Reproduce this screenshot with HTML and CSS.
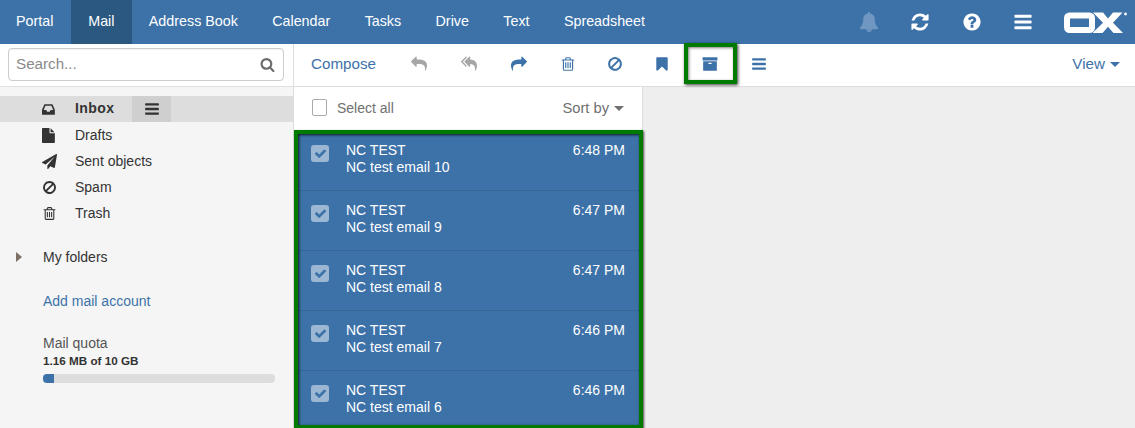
FILE: index.html
```html
<!DOCTYPE html>
<html lang="en">
<head>
<meta charset="utf-8">
<title>Mail</title>
<link rel="stylesheet" href="styles.css">
</head>
<body>
<svg class="defs" width="0" height="0" aria-hidden="true">
<symbol id="i-bell" viewBox="0 0 1792 1792"><path d="M912 1696q0-16-16-16-59 0-101.500-42.500t-42.500-101.500q0-16-16-16t-16 16q0 73 51.500 124.500t124.500 51.500q16 0 16-16zm816-288q0 52-38 90t-90 38h-448q0 106-75 181t-181 75-181-75-75-181h-448q-52 0-90-38t-38-90q50-42 91-88t85-119.500 74.500-158.500 50-206 19.500-260q0-152 117-282.500t307-158.500q-8-19-8-39 0-40 28-68t68-28 68 28 28 68q0 20-8 39 190 28 307 158.500t117 282.500q0 139 19.500 260t50 206 74.500 158.500 85 119.500 91 88z"/></symbol>
<symbol id="i-refresh" viewBox="0 0 1792 1792"><path d="M1639 1056q0 5-1 7-64 268-268 434.500t-478 166.500q-146 0-282.500-55t-243.500-157l-129 129q-19 19-45 19t-45-19-19-45v-448q0-26 19-45t45-19h448q26 0 45 19t19 45-19 45l-137 137q71 66 161 102t187 36q134 0 250-65t186-179q11-17 53-117 8-23 30-23h192q13 0 22.500 9.500t9.500 22.500zm25-800v448q0 26-19 45t-45 19h-448q-26 0-45-19t-19-45 19-45l138-138q-148-137-349-137-134 0-250 65t-186 179q-11 17-53 117-8 23-30 23h-199q-13 0-22.500-9.500t-9.500-22.500v-7q65-268 270-434.500t480-166.500q146 0 284 55.500t245 156.500l130-129q19-19 45-19t45 19 19 45z"/></symbol>
<symbol id="i-help" viewBox="0 0 1792 1792"><path d="M1024 1376v-192q0-14-9-23t-23-9h-192q-14 0-23 9t-9 23v192q0 14 9 23t23 9h192q14 0 23-9t9-23zm256-672q0-88-55.500-163t-138.500-116-170-41q-243 0-371 213-15 24 8 42l132 100q7 6 19 6 16 0 25-12 53-68 86-92 34-24 86-24 48 0 85.500 26t37.500 59q0 38-20 61t-68 45q-63 28-115.500 86.500t-52.500 125.500v36q0 14 9 23t23 9h192q14 0 23-9t9-23q0-19 21.500-49.500t54.500-49.500q32-18 49-28.500t46-35 44.500-48 28-60.500 12.500-81zm384 192q0 209-103 385.500t-279.500 279.500-385.500 103-385.500-103-279.500-279.500-103-385.500 103-385.500 279.500-279.500 385.500-103 385.500 103 279.500 279.500 103 385.500z"/></symbol>
<symbol id="i-bars" viewBox="0 0 1792 1792"><path d="M1664 1344v128q0 26-19 45t-45 19h-1408q-26 0-45-19t-19-45v-128q0-26 19-45t45-19h1408q26 0 45 19t19 45zm0-512v128q0 26-19 45t-45 19h-1408q-26 0-45-19t-19-45v-128q0-26 19-45t45-19h1408q26 0 45 19t19 45zm0-512v128q0 26-19 45t-45 19h-1408q-26 0-45-19t-19-45v-128q0-26 19-45t45-19h1408q26 0 45 19t19 45z"/></symbol>
<symbol id="i-search" viewBox="0 0 1792 1792"><path d="M1216 832q0-185-131.500-316.500t-316.500-131.500-316.500 131.500-131.500 316.500 131.500 316.500 316.500 131.500 316.500-131.500 131.500-316.500zm512 832q0 52-38 90t-90 38q-54 0-90-38l-343-342q-179 124-399 124-143 0-273.500-55.500t-225-150-150-225-55.500-273.500 55.500-273.500 150-225 225-150 273.500-55.500 273.500 55.500 225 150 150 225 55.500 273.500q0 220-124 399l343 343q37 37 37 90z"/></symbol>
<symbol id="i-reply" viewBox="0 0 1792 1792"><path d="M1792 1120q0 166-127 451-3 7-10.500 24t-13.500 30-13 22q-12 17-28 17-15 0-23.500-10t-8.500-25q0-9 2.500-26.500t2.500-23.500q5-68 5-123 0-101-17.500-181t-48.500-138.500-80-101-105.500-69.500-133-42.500-154-21.500-175.500-6h-224v256q0 26-19 45t-45 19-45-19l-512-512q-19-19-19-45t19-45l512-512q19-19 45-19t45 19 19 45v256h224q713 0 875 403 53 134 53 333z"/></symbol>
<symbol id="i-replyall" viewBox="0 0 1792 1792"><path d="M640 1082v70q0 42-39 59-13 5-25 5-27 0-45-19l-512-512q-19-19-19-45t19-45l512-512q29-31 70-14 39 17 39 59v69l-397 398q-19 19-19 45t19 45zm1152 38q0 58-17 133.500t-38.500 138-48 125-40.500 90.500l-20 40q-8 17-28 17-6 0-9-1-25-8-23-34 43-400-106-565-64-71-170.500-110.500t-267.500-52.500v251q0 42-39 59-13 5-25 5-27 0-45-19l-512-512q-19-19-19-45t19-45l512-512q29-31 70-14 39 17 39 59v262q411 28 599 221 169 173 169 509z"/></symbol>
<symbol id="i-share" viewBox="0 0 1792 1792"><path d="M1792 640q0 26-19 45l-512 512q-19 19-45 19t-45-19-19-45v-256h-224q-98 0-175.500 6t-154 21.500-133 42.500-105.500 69.500-80 101-48.500 138.500-17.500 181q0 55 5 123 0 6 2.500 23.500t2.500 26.500q0 15-8.500 25t-23.500 10q-16 0-28-17-7-9-13-22t-13.500-30-10.500-24q-127-285-127-451 0-199 53-333 162-403 875-403h224v-256q0-26 19-45t45-19 45 19l512 512q19 19 19 45z"/></symbol>
<symbol id="i-trash" viewBox="0 0 1792 1792"><path d="M704 736v576q0 14-9 23t-23 9h-64q-14 0-23-9t-9-23v-576q0-14 9-23t23-9h64q14 0 23 9t9 23zm256 0v576q0 14-9 23t-23 9h-64q-14 0-23-9t-9-23v-576q0-14 9-23t23-9h64q14 0 23 9t9 23zm256 0v576q0 14-9 23t-23 9h-64q-14 0-23-9t-9-23v-576q0-14 9-23t23-9h64q14 0 23 9t9 23zm128 724v-948h-896v948q0 22 7 40.500t14.500 27 10.500 8.500h832q3 0 10.500-8.500t14.500-27 7-40.500zm-672-1076h448l-48-117q-7-9-17-11h-317q-10 2-17 11zm928 32v64q0 14-9 23t-23 9h-96v948q0 83-47 143.500t-113 60.500h-832q-66 0-113-58.500t-47-141.500v-952h-96q-14 0-23-9t-9-23v-64q0-14 9-23t23-9h309l70-167q15-37 54-63t79-26h320q40 0 79 26t54 63l70 167h309q14 0 23 9t9 23z"/></symbol>
<symbol id="i-ban" viewBox="0 0 1792 1792"><path d="M1440 893q0-161-87-295l-754 753q137 89 297 89 111 0 211.500-43.500t173.500-116.500 116-174.500 43-212.500zm-999 299l755-754q-135-91-300-91-148 0-273 73t-198 199-73 274q0 162 89 299zm1223-299q0 157-61 300t-163.500 246-245 164-298.500 61-298.500-61-245-164-163.500-246-61-300 61-299.500 163.500-245.500 245-164 298.500-61 298.500 61 245 164 163.500 245.500 61 299.500z"/></symbol>
<symbol id="i-bookmark" viewBox="0 0 1792 1792"><path d="M1420 128q23 0 44 9 33 13 52.500 41t19.500 62v1289q0 34-19.500 62t-52.500 41q-19 8-44 8-48 0-83-32l-441-424-441 424q-36 33-83 33-23 0-44-9-33-13-52.500-41t-19.500-62v-1289q0-34 19.500-62t52.500-41q21-9 44-9h1048z"/></symbol>
<symbol id="i-archive" viewBox="0 0 1792 1792"><path d="M1088 832q0-26-19-45t-45-19h-256q-26 0-45 19t-19 45 19 45 45 19h256q26 0 45-19t19-45zm576-192v960q0 26-19 45t-45 19h-1408q-26 0-45-19t-19-45v-960q0-26 19-45t45-19h1408q26 0 45 19t19 45zm64-448v256q0 26-19 45t-45 19h-1536q-26 0-45-19t-19-45v-256q0-26 19-45t45-19h1536q26 0 45 19t19 45z"/></symbol>
<symbol id="i-inbox" viewBox="0 0 1792 1792"><path d="M1023 960h316q-1-3-2.500-8.500t-2.500-7.500l-212-496h-708l-212 496q-1 3-2.500 8.500t-2.500 7.500h316l95 192h320zm513 30v482q0 26-19 45t-45 19h-1408q-26 0-45-19t-19-45v-482q0-62 25-123l238-552q10-25 36.500-42t52.500-17h832q26 0 52.500 17t36.500 42l238 552q25 61 25 123z"/></symbol>
<symbol id="i-file" viewBox="0 0 1792 1792"><path d="M1024 512v-472q22 14 36 28l408 408q14 14 28 36h-472zm-128 32q0 40 28 68t68 28h544v1056q0 40-28 68t-68 28h-1344q-40 0-68-28t-28-68v-1600q0-40 28-68t68-28h800v544z"/></symbol>
<symbol id="i-plane" viewBox="0 0 1792 1792"><path d="M1764 11q33 24 27 64l-256 1536q-5 29-32 45-14 8-31 8-11 0-24-5l-453-185-242 295q-18 23-49 23-13 0-22-4-19-7-30.500-23.500t-11.500-36.500v-349l864-1059-1069 925-395-162q-37-14-40-55-2-40 32-59l1664-960q15-9 32-9 20 0 36 11z"/></symbol>
<symbol id="i-check" viewBox="0 0 1792 1792"><path d="M1671 566q0 40-28 68l-724 724-136 136q-28 28-68 28t-68-28l-136-136-362-362q-28-28-28-68t28-68l136-136q28-28 68-28t68 28l294 295 656-657q28-28 68-28t68 28l136 136q28 28 28 68z"/></symbol>
</svg>

<header class="topbar">
  <nav class="tabs">
    <a class="tab tab-first">Portal</a>
    <a class="tab tab-active">Mail</a>
    <a class="tab">Address Book</a>
    <a class="tab">Calendar</a>
    <a class="tab">Tasks</a>
    <a class="tab">Drive</a>
    <a class="tab">Text</a>
    <a class="tab">Spreadsheet</a>
  </nav>
  <div class="top-actions">
    <span class="top-btn top-bell"><svg class="ic-20"><use href="#i-bell"/></svg></span>
    <span class="top-btn"><svg class="ic-20"><use href="#i-refresh"/></svg></span>
    <span class="top-btn"><svg class="ic-20"><use href="#i-help"/></svg></span>
    <span class="top-btn"><svg class="ic-20"><use href="#i-bars"/></svg></span>
    <svg class="ox-logo" viewBox="0 0 64 22" aria-label="OX">
      <rect class="ox-o" x="3" y="3.500" width="25" height="14.500" rx="2.500"/>
      <polygon points="29,0.500 39,0.500 44,6.500 49,0.500 58.500,0.500 49,10.800 59,21 49.500,21 44,14.800 38.500,21 28.500,21 39,10.800"/>
      <circle cx="61.500" cy="2" r="1.400"/>
    </svg>
  </div>
</header>

<div class="app">
  <aside class="sidebar">
    <div class="search-wrap">
      <div class="search">
        <span class="search-ph">Search...</span>
        <svg class="search-ic"><use href="#i-search"/></svg>
      </div>
    </div>
    <ul class="folders">
      <li class="folder folder-active">
        <svg class="folder-ic"><use href="#i-inbox"/></svg>
        <span class="folder-name">Inbox</span>
        <span class="folder-menu"><svg class="ic-16"><use href="#i-bars"/></svg></span>
      </li>
      <li class="folder"><svg class="folder-ic"><use href="#i-file"/></svg><span class="folder-name">Drafts</span></li>
      <li class="folder"><svg class="folder-ic"><use href="#i-plane"/></svg><span class="folder-name">Sent objects</span></li>
      <li class="folder"><svg class="folder-ic"><use href="#i-ban"/></svg><span class="folder-name">Spam</span></li>
      <li class="folder"><svg class="folder-ic"><use href="#i-trash"/></svg><span class="folder-name">Trash</span></li>
    </ul>
    <div class="my-folders"><span class="caret-right"></span><span>My folders</span></div>
    <a class="add-account">Add mail account</a>
    <div class="quota">
      <div class="quota-title">Mail quota</div>
      <div class="quota-value">1.16 MB of 10 GB</div>
      <div class="quota-track"><div class="quota-fill" style="width:11px"></div></div>
    </div>
  </aside>

  <div class="content">
    <div class="toolbar">
      <a class="compose">Compose</a>
      <div class="tools">
        <span class="tool tool-off"><svg class="ic-16"><use href="#i-reply"/></svg></span>
        <span class="tool tool-off"><svg class="ic-16"><use href="#i-replyall"/></svg></span>
        <span class="tool"><svg class="ic-16"><use href="#i-share"/></svg></span>
        <span class="tool tool-mid"><svg class="ic-16"><use href="#i-trash"/></svg></span>
        <span class="tool tool-narrow"><svg class="ic-16"><use href="#i-ban"/></svg></span>
        <span class="tool tool-mid"><svg class="ic-16"><use href="#i-bookmark"/></svg></span>
        <span class="tool tool-mid"><svg class="ic-16"><use href="#i-archive"/></svg><i class="mark mark-tool"></i></span>
        <span class="tool"><svg class="ic-16"><use href="#i-bars"/></svg></span>
      </div>
      <a class="view">View<span class="caret-down"></span></a>
    </div>
    <div class="panes">
      <section class="list">
        <div class="list-head">
          <span class="select-box"></span>
          <span class="select-label">Select all</span>
          <span class="sort">Sort by<span class="caret-down caret-grey"></span></span>
        </div>
        <div class="rows">
          <article class="row">
            <span class="row-check"><svg class="ic-check"><use href="#i-check"/></svg></span>
            <div class="row-text"><div class="row-line"><span>NC TEST</span><span>6:48 PM</span></div><div>NC test email 10</div></div>
          </article>
          <article class="row">
            <span class="row-check"><svg class="ic-check"><use href="#i-check"/></svg></span>
            <div class="row-text"><div class="row-line"><span>NC TEST</span><span>6:47 PM</span></div><div>NC test email 9</div></div>
          </article>
          <article class="row">
            <span class="row-check"><svg class="ic-check"><use href="#i-check"/></svg></span>
            <div class="row-text"><div class="row-line"><span>NC TEST</span><span>6:47 PM</span></div><div>NC test email 8</div></div>
          </article>
          <article class="row">
            <span class="row-check"><svg class="ic-check"><use href="#i-check"/></svg></span>
            <div class="row-text"><div class="row-line"><span>NC TEST</span><span>6:46 PM</span></div><div>NC test email 7</div></div>
          </article>
          <article class="row">
            <span class="row-check"><svg class="ic-check"><use href="#i-check"/></svg></span>
            <div class="row-text"><div class="row-line"><span>NC TEST</span><span>6:46 PM</span></div><div>NC test email 6</div></div>
          </article>
          <i class="mark mark-rows"></i>
        </div>
      </section>
      <main class="detail"></main>
    </div>
  </div>
</div>
</body>
</html>
```
FILE: styles.css
```css
* { box-sizing: border-box; }
html, body { height: 100%; }
body {
  margin: 0;
  overflow: hidden;
  display: flex;
  flex-direction: column;
  font: 14px/20px "Liberation Sans", Arial, sans-serif;
  color: #333;
  background: #fff;
}
.defs { position: absolute; }
svg { fill: currentColor; display: block; }
.ic-20 { width: 20px; height: 20px; }
.ic-16 { width: 16px; height: 16px; }

/* top bar */
.topbar {
  flex: 0 0 44px;
  display: flex;
  justify-content: space-between;
  background: #3d72a9;
  color: #fff;
}
.tabs { display: flex; font-size: 14.3px; }
.tab { padding: 0 17.200px; line-height: 43px; }
.tab-first { padding-left: 16px; padding-right: 17.700px; }
.tab-active { background: #2a5880; }
.top-actions { display: flex; align-items: center; padding-right: 7px; }
.top-btn { width: 51.500px; display: flex; justify-content: center; }
.top-bell { color: #6f97c2; }
.ox-logo { width: 64px; height: 22px; margin-left: 15px; margin-top: 1px; }
.ox-o { fill: none; stroke: #fff; stroke-width: 6; }

/* shell */
.app { flex: 1; display: flex; min-height: 0; }
.sidebar {
  flex: 0 0 294px;
  background: #f5f5f5;
  border-right: 1px solid #ddd;
  display: flex;
  flex-direction: column;
}
.search-wrap {
  height: 43px;
  padding: 4px 9px 0 8px;
  background: #fff;
  border-bottom: 1px solid #e0e0e0;
}
.search {
  height: 33px;
  padding: 0 8px 2px 7px;
  border: 1px solid #ccc;
  border-radius: 4px;
  display: flex;
  align-items: center;
  justify-content: space-between;
  box-shadow: inset 0 1px 1px rgba(0,0,0,.05);
}
.search-ph { color: #8a8a8a; font-size: 15.2px; }
.search-ic { width: 15px; height: 15px; color: #6b6b6b; margin-top: 2px; }

.folders { list-style: none; margin: 9px 0 0; padding: 0; }
.folder { height: 26px; display: flex; align-items: center; padding-left: 42px; }
.folder-ic { width: 15px; height: 15px; flex: none; margin-right: 18px; color: #333; }
.folder-active { background: #ddd; }
.folder-active .folder-name { font-weight: 700; letter-spacing: .4px; width: 57px; padding-bottom: 2px; }
.folder-menu {
  width: 39px;
  height: 26px;
  background: #cfcfcf;
  display: flex;
  align-items: center;
  justify-content: center;
}
.my-folders { margin-top: 18px; height: 26px; display: flex; align-items: center; padding-left: 16px; }
.caret-right {
  width: 0;
  height: 0;
  border-left: 6px solid #7b6f66;
  border-top: 5px solid transparent;
  border-bottom: 5px solid transparent;
  margin-right: 21px;
}
.add-account { margin: 21px 0 0 43px; line-height: 20px; color: #3d72a9; }
.quota { margin: 22px 0 0 43px; width: 232px; }
.quota-title { line-height: 20px; color: #555; }
.quota-value { font-size: 11.700px; font-weight: 700; line-height: 15px; }
.quota-track { height: 9px; margin-top: 6px; border-radius: 4px; background: #ddd; overflow: hidden; }
.quota-fill { height: 100%; background: #3d72a9; }

/* toolbar */
.content { flex: 1; display: flex; flex-direction: column; min-width: 0; }
.toolbar {
  flex: 0 0 43px;
  display: flex;
  align-items: center;
  padding: 0 15px 2px 17px;
  border-bottom: 1px solid #ddd;
  color: #3d72a9;
  font-size: 15.200px;
}
.compose { width: 83px; }
.tools { display: flex; flex: 1; }
.tool { position: relative; width: 50px; height: 30px; display: flex; align-items: center; justify-content: center; }
.tool-mid { width: 48px; }
.tool-narrow { width: 46px; }
.tool-off { color: #a6a6a6; }
.caret-down {
  display: inline-block;
  width: 0;
  height: 0;
  margin-left: 5px;
  vertical-align: 2px;
  border-top: 5px solid currentColor;
  border-left: 5px solid transparent;
  border-right: 5px solid transparent;
}
.caret-grey { color: #707070; }

/* highlights that lie over the page */
.mark {
  position: absolute;
  border: 4px solid #007a00;
  pointer-events: none;
}
.mark-tool {
  left: -2px;
  top: -6px;
  width: 53px;
  height: 41px;
  box-shadow: 1px 1px 3px rgba(0,0,0,.8), inset 1px 1px 3px rgba(0,0,0,.5);
}
.mark-rows {
  left: 0;
  top: 0;
  right: -1px;
  bottom: 2px;
  box-shadow: 1px 1px 2px rgba(0,0,0,.7), inset 1px 1px 3px rgba(0,0,0,.8);
}

/* list */
.panes { flex: 1; display: flex; min-height: 0; }
.list { flex: 0 0 349px; display: flex; flex-direction: column; border-right: 1px solid #ddd; }
.list-head { flex: 0 0 43px; display: flex; align-items: center; padding: 0 18px 2px 18px; color: #707070; }
.select-box { width: 15px; height: 17px; border: 1px solid #aaa; border-radius: 2px; background: #fff; margin-right: 10px; }
.select-label { flex: 1; }
.sort { font-size: 14.700px; }
.rows { position: relative; flex: 1; padding-top: 1px; background: #3d72a9; color: #fff; }
.row {
  height: 60px;
  display: flex;
  padding: 11px 17px 0 17px;
  border-bottom: 1px solid #356796;
}
.row-check {
  flex: none;
  width: 18px;
  height: 17px;
  margin-top: 3px;
  margin-right: 17px;
  border-radius: 3px;
  background: #9cb7d3;
  color: #3d72a9;
  display: flex;
  align-items: center;
  justify-content: center;
}
.ic-check { width: 13px; height: 13px; }
.row-text { flex: 1; line-height: 17px; }
.row-line { display: flex; justify-content: space-between; }
.detail { flex: 1; background: #eee; }
.view { white-space: nowrap; }
```
